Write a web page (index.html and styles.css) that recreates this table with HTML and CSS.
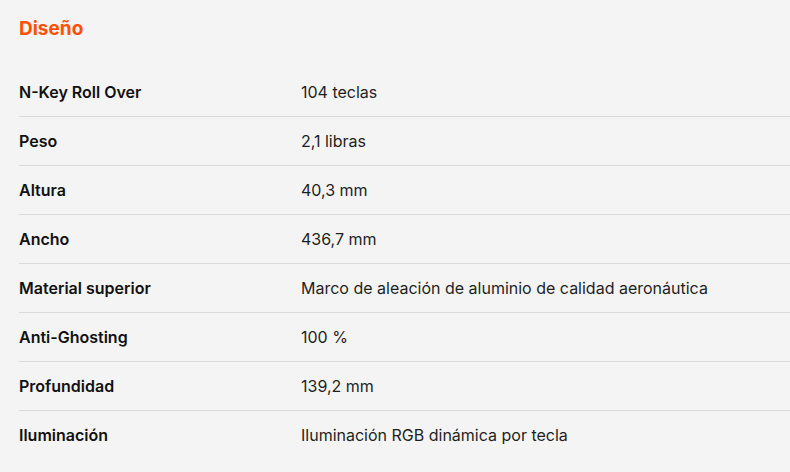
FILE: index.html
```html
<!DOCTYPE html>
<html lang="es">
<head>
<meta charset="utf-8">
<link rel="stylesheet" href="styles.css">
</head>
<body>
<section class="specs">
  <h2 class="specs-title">Diseño</h2>
  <div class="spec-list">
    <div class="spec-row"><div class="spec-label">N-Key Roll Over</div><div class="spec-value">104 teclas</div></div>
    <div class="spec-row"><div class="spec-label">Peso</div><div class="spec-value">2,1 libras</div></div>
    <div class="spec-row"><div class="spec-label">Altura</div><div class="spec-value">40,3 mm</div></div>
    <div class="spec-row"><div class="spec-label">Ancho</div><div class="spec-value">436,7 mm</div></div>
    <div class="spec-row"><div class="spec-label">Material superior</div><div class="spec-value">Marco de aleación de aluminio de calidad aeronáutica</div></div>
    <div class="spec-row"><div class="spec-label">Anti-Ghosting</div><div class="spec-value">100 %</div></div>
    <div class="spec-row"><div class="spec-label">Profundidad</div><div class="spec-value">139,2 mm</div></div>
    <div class="spec-row"><div class="spec-label">Iluminación</div><div class="spec-value">Iluminación RGB dinámica por tecla</div></div>
  </div>
</section>
</body>
</html>
```
FILE: styles.css
```css
html, body {
  margin: 0;
  padding: 0;
  background: #f4f4f4;
}
body {
  font-family: Inter, "Noto Sans", sans-serif;
  color: #1a1a1a;
}
.specs {
  padding: 17px 0 0 19px;
}
.specs-title {
  margin: 0 0 27px 0;
  font-size: 19px;
  line-height: 24px;
  font-weight: 700;
  color: #ff5000;
}
.spec-list {
  display: flex;
  flex-direction: column;
}
.spec-row {
  display: grid;
  grid-template-columns: 282px 1fr;
  align-items: center;
  height: 48px;
  border-bottom: 1px solid #dadada;
  font-size: 16px;
  line-height: 22px;
}
.spec-row:last-child {
  border-bottom: none;
}
.spec-label {
  font-weight: 600;
  color: #111;
}
.spec-value {
  font-weight: 400;
  color: #1f1f1f;
}
```
